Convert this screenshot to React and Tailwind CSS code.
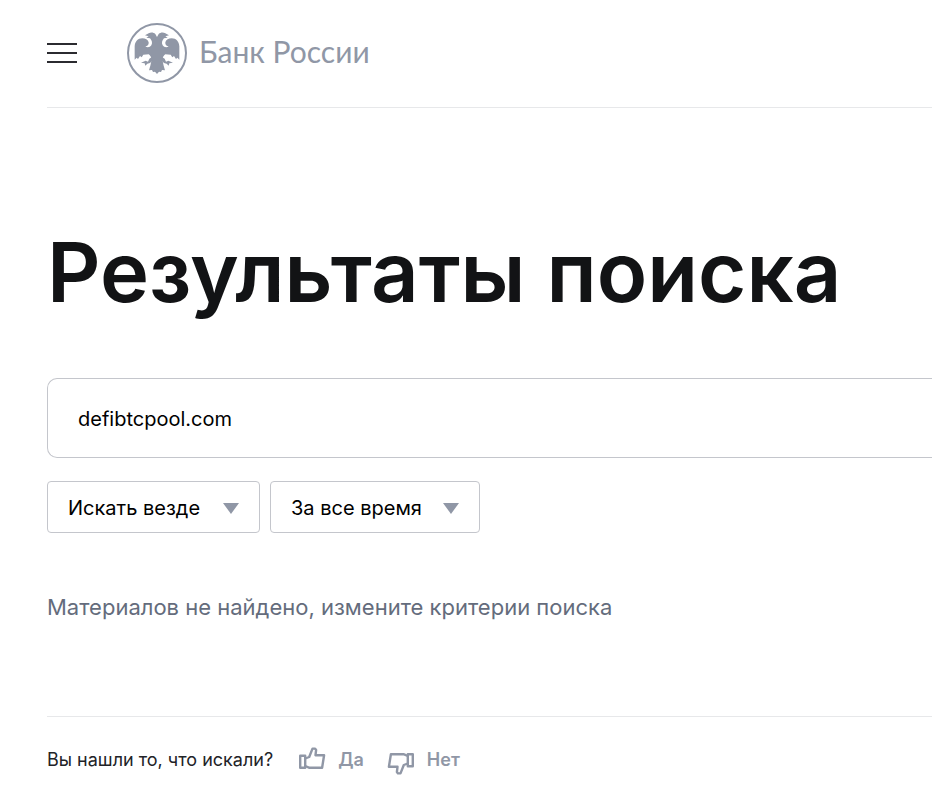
import React from "react";

function Emblem() {
  return (
    <svg viewBox="21 24 180 180" className="size-15 shrink-0" fill="none" aria-hidden="true">
      <circle cx="111" cy="114" r="87" stroke="#9097a6" strokeWidth="6" />
      <g fill="#9097a6">
        <path d="M111 66 L106 57 C101 52 92 51 86 55 L75 61 L86 64 L79 68 L90 70 C96 76 98 85 94 91 C90 97 82 99 76 94 C82 94 87 90 86 82 C84 74 76 70 67 70 C53 70 45 80 44 94 L44 134 L50 128 L54 132 L60 123 L65 127 L70 119 L86 118 C91 121 94 127 95 134 L91 152 L87 166 L96 165 L99 171 L105 170 L111 177 L117 170 L123 171 L126 165 L135 166 L131 152 L127 134 C128 127 131 121 136 118 L152 119 L157 127 L162 123 L168 132 L172 128 L178 134 L178 94 C177 80 169 70 155 70 C146 70 138 74 136 82 C135 90 140 94 146 94 C140 99 132 97 128 91 C124 85 126 76 132 70 L143 68 L136 64 L147 61 L136 55 C130 51 121 52 116 57 Z" />
        <path d="M97 125 L88 131 L84 140 L77 137 L63 143 L74 145 L76 152 L82 146 L90 144 L97 137 Z" />
        <path d="M125 125 L134 131 L138 140 L145 137 L159 143 L148 145 L146 152 L140 146 L132 144 L125 137 Z" />
      </g>
    </svg>
  );
}

function Thumb({ className = "" }) {
  return (
    <svg
      viewBox="0 0 28 24"
      className={`h-6 w-7 shrink-0 ${className}`}
      fill="none"
      stroke="#9097a6"
      strokeWidth="2.4"
      strokeLinejoin="round"
      aria-hidden="true"
    >
      <path d="M2.2 9.7h5v12.1h-5z" />
      <path d="M7.2 12.5l4-1.5L14.5 2.6h2.6l1 1.4-.6 5.2h8.6l-2 12.6H11.5l-4.3-1.8" />
    </svg>
  );
}

function Filter({ label, option, className }) {
  return (
    <div className={`relative ${className}`}>
      <select
        aria-label={label}
        className="h-13 w-full appearance-none rounded border border-[#c4c6cc] bg-white pl-5 pr-12 pt-0.5 text-[20px] text-black"
      >
        <option>{option}</option>
      </select>
      <svg viewBox="0 0 16 11" className="pointer-events-none absolute right-[21px] top-[22px] h-[11px] w-4" aria-hidden="true">
        <path d="M0 0h16L8 11z" fill="#9097a6" />
      </svg>
    </div>
  );
}

export default function App() {
  return (
    <div className="bg-white pl-[47px] font-['Inter','Liberation_Sans',sans-serif] text-black">
      <header className="flex h-27 items-center gap-[50px] border-b border-[#e7e8ea] pb-0.5">
        <button type="button" aria-label="Меню" className="flex w-[30px] flex-col gap-[7px]">
          <span className="h-0.5 w-full bg-[#2b2b30]" />
          <span className="h-0.5 w-full bg-[#2b2b30]" />
          <span className="h-0.5 w-full bg-[#2b2b30]" />
        </button>
        <a href="#" className="flex items-center gap-3 font-['Lato','Open_Sans',sans-serif] text-[30px] text-[#9097a6]">
          <Emblem />
          <span className="pb-0.5">Банк России</span>
        </a>
      </header>
      <main>
        <h1 className="pt-28 text-[83px] font-semibold leading-[104px] text-[#121315]">Результаты поиска</h1>
        <form className="pt-[54px]">
          <input
            type="text"
            aria-label="Поиск"
            defaultValue="defibtcpool.com"
            className="block h-20 w-full rounded-l-[10px] border border-r-0 border-[#c4c6cc] px-[30px] pt-0.5 text-[20px] outline-none"
          />
          <div className="flex gap-2.5 pt-[23px]">
            <Filter label="Где искать" option="Искать везде" className="w-[213px]" />
            <Filter label="Период" option="За все время" className="w-[210px]" />
          </div>
        </form>
        <p className="pb-[92px] pt-[58px] text-[22px] leading-[33px] text-[#646c7c]">
          Материалов не найдено, измените критерии поиска
        </p>
      </main>
      <footer className="flex h-[76px] items-center border-t border-[#e7e8ea] pt-2.5 text-[18px]">
        <span className="text-[#222327]">Вы нашли то, что искали?</span>
        <button type="button" className="ml-[25px] flex items-center gap-3 font-semibold text-[#9097a6]">
          <Thumb className="-translate-y-0.5" />
          Да
        </button>
        <button type="button" className="ml-[23px] flex items-center gap-3 font-semibold text-[#9097a6]">
          <Thumb className="translate-y-1 rotate-180" />
          Нет
        </button>
      </footer>
    </div>
  );
}
